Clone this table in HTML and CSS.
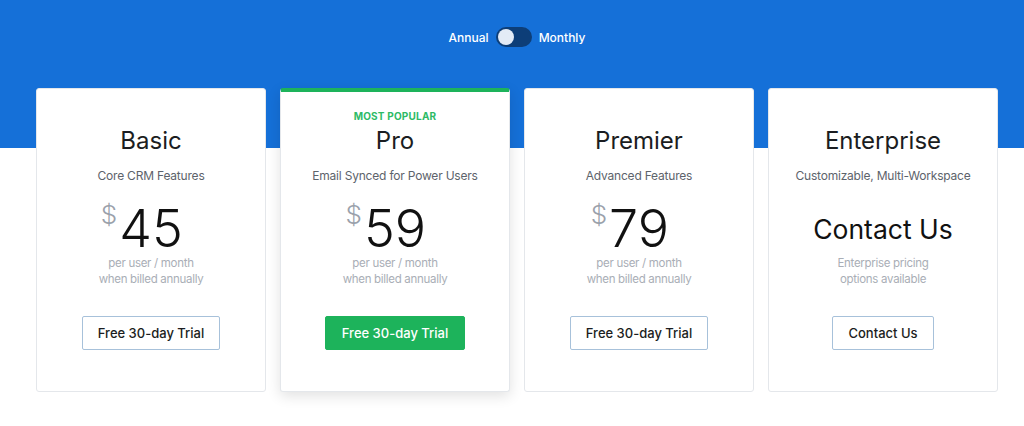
FILE: index.html
```html
<!DOCTYPE html>
<html lang="en">
<head>
    <meta charset="UTF-8">
    <meta name="viewport" content="width=device-width, initial-scale=1.0">
    <title>Pricing</title>
    <link rel="stylesheet" href="styles.css">
</head>
<body>
    <div class="page">
        <div class="billing">
            <span>Annual</span>
            <span class="switch"><span class="knob"></span></span>
            <span>Monthly</span>
        </div>

        <div class="plans">
            <div class="plan">
                <div class="badge"></div>
                <h2>Basic</h2>
                <p class="tagline">Core CRM Features</p>
                <div class="price"><span class="amount"><span class="currency">$</span>45</span></div>
                <p class="note">per user / month<br>when billed annually</p>
                <button class="btn">Free 30-day Trial</button>
            </div>
            <div class="plan popular">
                <div class="badge">MOST POPULAR</div>
                <h2>Pro</h2>
                <p class="tagline">Email Synced for Power Users</p>
                <div class="price"><span class="amount"><span class="currency">$</span>59</span></div>
                <p class="note">per user / month<br>when billed annually</p>
                <button class="btn btn-green">Free 30-day Trial</button>
            </div>
            <div class="plan">
                <div class="badge"></div>
                <h2>Premier</h2>
                <p class="tagline">Advanced Features</p>
                <div class="price"><span class="amount"><span class="currency">$</span>79</span></div>
                <p class="note">per user / month<br>when billed annually</p>
                <button class="btn">Free 30-day Trial</button>
            </div>
            <div class="plan">
                <div class="badge"></div>
                <h2>Enterprise</h2>
                <p class="tagline">Customizable, Multi-Workspace</p>
                <div class="price contact">Contact Us</div>
                <p class="note">Enterprise pricing<br>options available</p>
                <button class="btn">Contact Us</button>
            </div>
        </div>
    </div>
</body>
</html>
```

FILE: styles.css
```css
body {
    margin: 0;
    font-family: Inter, "Noto Sans", sans-serif;
    color: #1b1d21;
    background: #fff;
}
.page {
    min-height: 426px;
    background: linear-gradient(#1570d8 148px, #fff 148px);
}
.billing {
    display: flex;
    justify-content: center;
    align-items: center;
    gap: 7px;
    padding-top: 27px;
    height: 20px;
    padding-left: 10px;
    color: #fff;
    font-size: 12px;
    font-weight: 500;
}
.switch {
    display: flex;
    align-items: center;
    width: 36px;
    height: 20px;
    padding: 0 2px;
    box-sizing: border-box;
    border-radius: 10px;
    background: #0d3e78;
}
.knob {
    width: 16px;
    height: 16px;
    border-radius: 50%;
    background: #e3ebf6;
}
.plans {
    display: flex;
    gap: 14px;
    margin-top: 41px;
    padding-left: 36px;
}
.plan {
    width: 230px;
    box-sizing: border-box;
    display: flex;
    flex-direction: column;
    align-items: center;
    padding: 20px 0 41px;
    background: #fff;
    border: 1px solid #e4e7eb;
    border-radius: 3px;
    text-align: center;
}
.plan.popular {
    border-top: 4px solid #1db35b;
    padding-top: 17px;
    box-shadow: 0 4px 14px rgba(0, 0, 0, 0.12);
}
.badge {
    height: 14px;
    line-height: 14px;
    font-size: 10px;
    font-weight: 700;
    color: #2dba66;
    letter-spacing: 0.2px;
}
h2 {
    margin: 3px 0 0;
    font-size: 24px;
    line-height: 30px;
    font-weight: 400;
}
.tagline {
    margin: 11px 0 0;
    font-size: 12px;
    letter-spacing: -0.2px;
    line-height: 18px;
    color: #5d636b;
}
.price {
    display: flex;
    justify-content: center;
    align-items: flex-start;
    margin-top: 18px;
    height: 52px;
    font-size: 52px;
    line-height: 52px;
    font-weight: 300;
    color: #111;
}
.amount {
    position: relative;
}
.currency {
    position: absolute;
    right: 100%;
    top: -3px;
    margin-right: 2px;
    font-size: 26px;
    line-height: 30px;
    color: #9aa1ab;
    font-weight: 300;
}
.price.contact {
    font-size: 26.5px;
    font-weight: 400;
    align-items: center;
}
.note {
    margin: 0;
    font-size: 11.5px;
    letter-spacing: -0.3px;
    line-height: 16px;
    color: #a9aeb6;
}
.btn {
    margin-top: 29px;
    height: 34px;
    padding: 0 15px;
    background: #fff;
    border: 1px solid #a7c1da;
    border-radius: 2px;
    font-family: inherit;
    font-size: 13px;
    font-weight: 500;
    color: #1b1d21;
}
.btn-green {
    background: #1db35b;
    border-color: #1db35b;
    color: #fff;
    padding: 0 16px;
}
```
